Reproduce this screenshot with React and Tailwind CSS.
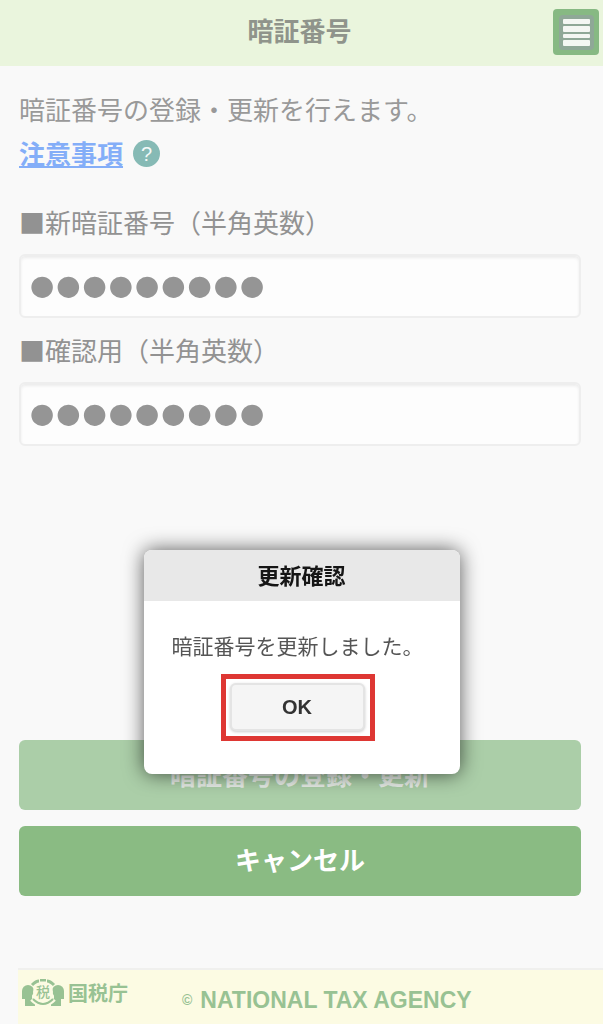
import React, { useState } from "react";

function MenuIcon() {
  return (
    <svg viewBox="0 0 46 46" className="w-full h-full" aria-hidden="true">
      <rect x="6" y="6" width="35" height="35" rx="4" fill="#8fa897" />
      <g fill="#f4f7f3">
        <rect x="10" y="10" width="27" height="5" rx="1" />
        <rect x="10" y="17" width="27" height="6" rx="1" />
        <rect x="10" y="25" width="27" height="4" rx="1" />
        <rect x="10" y="31" width="27" height="6" rx="1" />
      </g>
    </svg>
  );
}

function AgencyLogo() {
  return (
    <svg viewBox="0 0 42 28" className="w-[42px] h-7 shrink-0" aria-hidden="true">
      <g fill="#98c293">
        <circle cx="6" cy="12" r="6" />
        <circle cx="36" cy="12" r="6" />
        <path d="M0 12h10v7l3 3v5H3v-7H0z" />
        <path d="M42 12h-10v7l-3 3v5h10v-7h3z" />
      </g>
      <ellipse cx="21" cy="13" rx="10" ry="12" fill="#fcfbe3" />
      <path d="M10 20Q21 31 32 20" fill="none" stroke="#fcfbe3" strokeWidth="5" />
      <path d="M11 20Q21 30 31 20" fill="none" stroke="#98c293" strokeWidth="2" />
      <path d="M10 6Q14 2 17 2M18 1h6M25 2q3 0 7 4" fill="none" stroke="#98c293" strokeWidth="3" />
      <text
        x="21"
        y="18"
        textAnchor="middle"
        fontSize="14"
        fontWeight="500"
        fill="#98c293"
        fontFamily="'Noto Sans CJK JP', sans-serif"
      >
        税
      </text>
    </svg>
  );
}

function PasswordField({ id, label, value, onChange }) {
  return (
    <div>
      <label
        htmlFor={id}
        className="flex items-center h-16 pb-0.5 text-[26px] text-[#929292] font-['Noto_Sans_CJK_JP',sans-serif]"
      >
        ■{label}
      </label>
      <input
        id={id}
        type="password"
        value={value}
        onChange={(e) => onChange(e.target.value)}
        className="block w-full h-16 px-2 rounded-md border-2 border-[#eeeeee] bg-[#fdfdfd] text-[75px] font-bold text-[#959595] shadow-[inset_0_2px_3px_#ececec] outline-none"
      />
    </div>
  );
}

export default function App() {
  const [form, setForm] = useState({ pin: "password1", confirm: "password1" });
  const [open, setOpen] = useState(true);

  return (
    <div className="min-h-screen flex flex-col bg-[#f9f9f9] font-['Liberation_Sans','Noto_Sans_CJK_JP',sans-serif]">
      <header className="relative flex items-center justify-center h-[66px] pb-0.5 pr-1 bg-[#eaf5dd]">
        <h1 className="text-[26px] font-bold text-[#8f948b]">暗証番号</h1>
        <button
          type="button"
          aria-label="メニュー"
          className="absolute right-1 top-[9px] w-[46px] h-[46px] rounded bg-[#87b983]"
        >
          <MenuIcon />
        </button>
      </header>

      <main className="pl-[19px] pr-[22px] pt-6">
        <p className="text-[26px] leading-[42px] text-[#999999]">暗証番号の登録・更新を行えます。</p>
        <div className="flex items-start gap-2.5 h-[46px] pt-1">
          <a
            href="#notes"
            className="text-[26px] leading-[39px] font-bold text-[#84aef8] underline decoration-2 underline-offset-2"
          >
            注意事項
          </a>
          <span className="flex items-center justify-center w-[27px] h-[27px] mt-1 rounded-full bg-[#86bab5] text-[#f4f9f8] text-xl font-medium">
            ?
          </span>
        </div>

        <div className="pt-3">
          <PasswordField
            id="pin"
            label="新暗証番号（半角英数）"
            value={form.pin}
            onChange={(pin) => setForm({ ...form, pin })}
          />
          <PasswordField
            id="confirm"
            label="確認用（半角英数）"
            value={form.confirm}
            onChange={(confirm) => setForm({ ...form, confirm })}
          />
        </div>
      </main>

      <div className="mt-auto pl-[19px] pr-[22px] flex flex-col gap-4">
        <button type="button" className="h-[70px] pt-0.5 rounded-md bg-[#abcea8] text-[26px] font-bold text-[#e6ece6]">
          暗証番号の登録・更新
        </button>
        <button type="button" className="h-[70px] rounded-md bg-[#8abb83] text-[26px] font-bold text-white">
          キャンセル
        </button>
      </div>

      <footer className="mt-[72px] ml-[18px] h-14 pl-1 flex items-start border-t-2 border-[#f0f0ee] bg-[#fcfbe3] text-[#98c293] font-bold">
        <div className="flex items-center gap-1 pt-2">
          <AgencyLogo />
          <span className="pt-0.5 text-xl leading-7">国税庁</span>
        </div>
        <p className="flex items-center gap-2 pt-3 pl-[54px] text-[23px] leading-9">
          <small className="text-sm">©</small>
          NATIONAL TAX AGENCY
        </p>
      </footer>

      {open && (
        <div className="fixed inset-x-0 top-[550px] flex justify-center">
          <div
            role="dialog"
            aria-labelledby="dialog-title"
            className="w-[316px] h-56 rounded-lg overflow-hidden bg-white text-center shadow-[0_0_20px_rgba(0,0,0,0.65)]"
          >
            <h2 id="dialog-title" className="h-[51px] leading-[54px] bg-[#e8e8e8] text-[22px] font-bold text-[#151515]">
              更新確認
            </h2>
            <div className="pr-2">
              <p className="pt-7 text-[21px] leading-9 text-[#555555]">暗証番号を更新しました。</p>
              <div className="mt-[9px] mx-auto w-[154px] h-[67px] border-[5px] border-[#de3733] p-1">
                <button
                  type="button"
                  onClick={() => setOpen(false)}
                  className="block w-[135px] h-12 rounded-md border-2 border-[#e4e4e4] bg-[#f5f5f5] text-xl font-bold text-[#333333] shadow-[0_1px_3px_#cccccc]"
                >
                  OK
                </button>
              </div>
            </div>
          </div>
        </div>
      )}
    </div>
  );
}
